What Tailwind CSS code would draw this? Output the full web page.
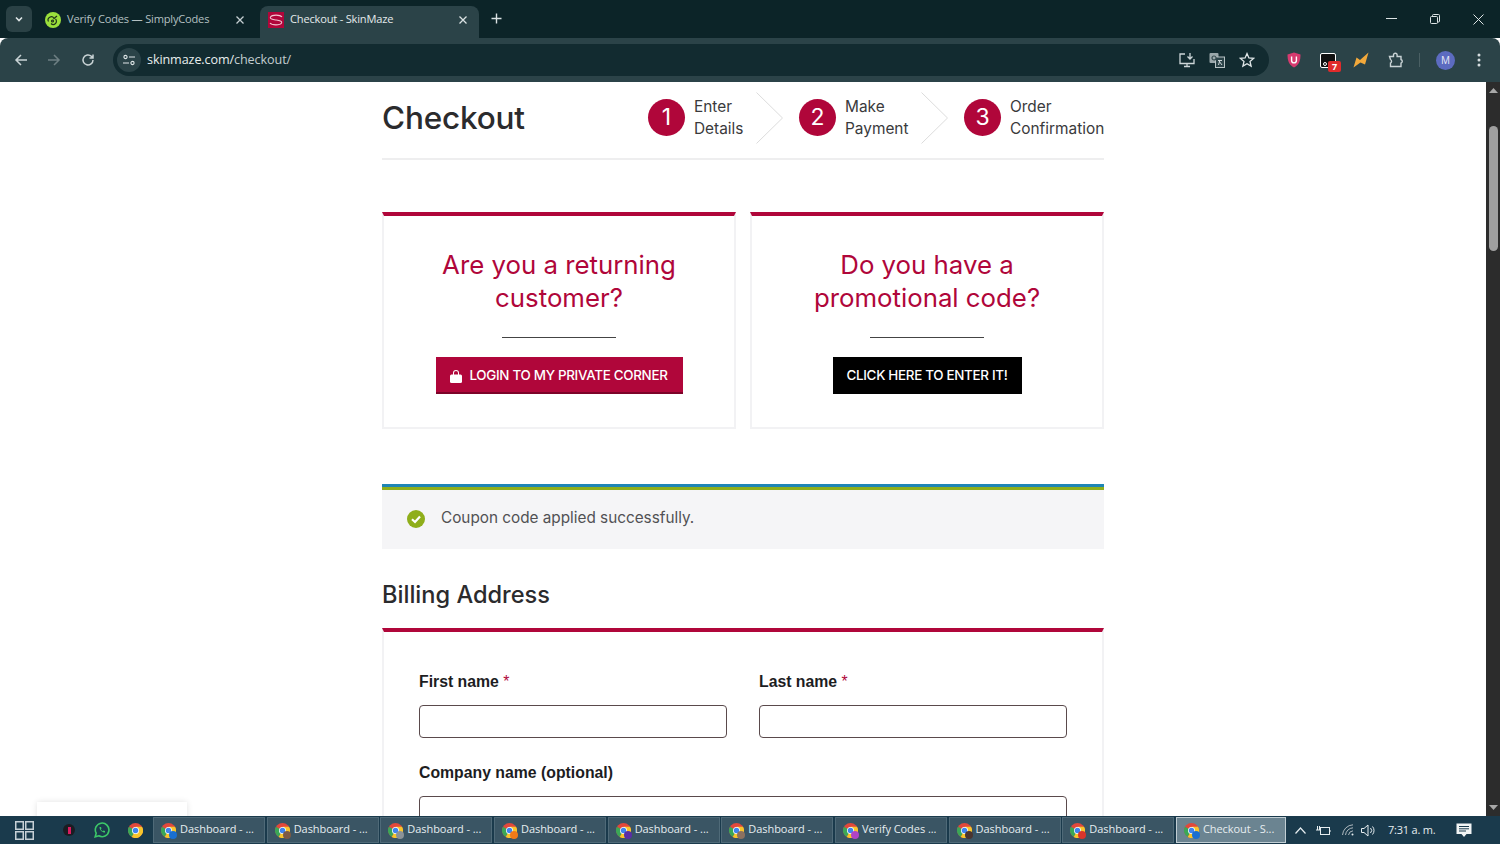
<!DOCTYPE html>
<html lang="en">
<head>
    <meta charset="UTF-8">
    <meta name="viewport" content="width=device-width, initial-scale=1.0">
    <title>Checkout - SkinMaze</title>
    <script src="https://cdn.jsdelivr.net/npm/@tailwindcss/browser@4"></script>
</head>
<body class="bg-white overflow-hidden">

<svg class="hidden">
    <symbol id="chrome" viewBox="0 0 24 24">
        <circle cx="12" cy="12" r="12" fill="#e2483b"/>
        <path d="M12 12 L1.6 6 A12 12 0 0 0 6 22.4 Z" fill="#3aa757"/>
        <path d="M12 6 H22.4 A12 12 0 0 1 6 22.4 L12 12 Z" fill="#f7c52c"/>
        <circle cx="12" cy="12" r="5.6" fill="#fff"/>
        <circle cx="12" cy="12" r="4.4" fill="#3f84ee"/>
    </symbol>
</svg>

<div class="w-[1500px] h-[844px] flex flex-col font-['Open_Sans',sans-serif]">

    <!-- tab strip -->
    <div class="h-[38px] bg-[#0c2428] flex items-end relative text-[11.1px]">
        <div class="w-[26px] h-[26px] ml-[6px] mb-[6px] rounded-md bg-[#2a4145] flex items-center justify-center">
            <svg width="10" height="10" viewBox="0 0 10 10" fill="none" stroke="#dfe6e7" stroke-width="1.6"><path d="M2 3.5 L5 6.5 L8 3.5"/></svg>
        </div>
        <div class="w-[228px] h-[32px] flex items-center pl-[13px] pb-[5px] text-[#b4c0c2]">
            <svg width="16" height="16" viewBox="0 0 16 16"><circle cx="8" cy="8" r="8" fill="#9be03c"/><path d="M3.5 9.5 a3 3 0 0 1 5.5 -3 l3 -2.5 M6 11.5 a3 3 0 0 0 4.5 -4.5 M6.5 9 a1 1 0 1 0 2 0 a1 1 0 1 0 -2 0" fill="none" stroke="#20331a" stroke-width="1.2"/></svg>
            <span class="ml-[6px] w-[168px] tracking-[-0.2px]">Verify Codes — SimplyCodes</span>
            <svg width="10" height="10" viewBox="0 0 10 10" stroke="#c6d0d2" stroke-width="1.3"><path d="M1.5 1.5 L8.5 8.5 M8.5 1.5 L1.5 8.5"/></svg>
        </div>
        <div class="w-[219px] h-[32px] bg-[#2b4348] rounded-t-lg flex items-center pl-[8px] pb-[5px] text-[#e4eaeb]">
            <span class="w-[16px] h-[16px] bg-[#b0063a] flex items-center justify-center">
                <svg width="14" height="12" viewBox="0 0 14 12" fill="none" stroke="#f3c6d2" stroke-width="1.1"><path d="M13 3 C11 0.5 3 0.5 1.5 3 C0.5 5 4 5.5 7 6 C10 6.5 13.5 7 12.5 9 C11 11.5 3 11.5 1 9"/></svg>
            </span>
            <span class="ml-[6px] w-[168px] tracking-[-0.2px]">Checkout - SkinMaze</span>
            <svg width="10" height="10" viewBox="0 0 10 10" stroke="#dbe2e3" stroke-width="1.3"><path d="M1.5 1.5 L8.5 8.5 M8.5 1.5 L1.5 8.5"/></svg>
        </div>
        <div class="ml-[12px] mb-[14px]">
            <svg width="11" height="11" viewBox="0 0 11 11" stroke="#dbe2e3" stroke-width="1.4"><path d="M5.5 0.5 V10.5 M0.5 5.5 H10.5"/></svg>
        </div>
        <div class="ml-auto flex items-center h-full">
            <svg class="mr-[33px]" width="11" height="2" viewBox="0 0 11 2"><rect width="11" height="1" fill="#dde4e5"/></svg>
            <svg class="mr-[33px]" width="10" height="10" viewBox="0 0 10 10" fill="none" stroke="#dde4e5"><rect x="0.5" y="2.5" width="7" height="7" rx="1"/><path d="M2.5 2.5 V1.5 a1 1 0 0 1 1 -1 H8.5 a1 1 0 0 1 1 1 V7 a1 1 0 0 1 -1 1 H7.5"/></svg>
            <svg class="mr-[16px]" width="11" height="11" viewBox="0 0 11 11" stroke="#dde4e5"><path d="M0.5 0.5 L10.5 10.5 M10.5 0.5 L0.5 10.5"/></svg>
        </div>
    </div>

    <!-- toolbar -->
    <div class="h-[44px] bg-[#2b4348] rounded-t-lg flex items-center">
        <svg class="ml-[14px]" width="14" height="14" viewBox="0 0 14 14" fill="none" stroke="#c9d3d5" stroke-width="1.5"><path d="M13 7 H2 M7 2 L2 7 L7 12"/></svg>
        <svg class="ml-[19px]" width="14" height="14" viewBox="0 0 14 14" fill="none" stroke="#6d7f83" stroke-width="1.5"><path d="M1 7 H12 M7 2 L12 7 L7 12"/></svg>
        <svg class="ml-[20px]" width="14" height="14" viewBox="0 0 14 14" fill="none" stroke="#c9d3d5" stroke-width="1.5"><path d="M12 7 A5 5 0 1 1 10.4 3.3 L12 5 M12 1.5 V5 H8.5"/></svg>
        <div class="ml-[18px] w-[1156px] h-[32px] rounded-full bg-[#122b30] flex items-center pl-[4px]">
            <span class="w-[24px] h-[24px] rounded-full bg-[#2b4348] flex items-center justify-center">
                <svg width="12" height="12" viewBox="0 0 12 12" fill="none" stroke="#dfe6e7" stroke-width="1.1"><circle cx="2.5" cy="3" r="1.6"/><path d="M6 3 H12 M0 9 H6"/><circle cx="9.5" cy="9" r="1.6"/></svg>
            </span>
            <span class="ml-[6px] text-[12.6px] text-[#e8eeee] tracking-[-0.1px]">skinmaze.com/<span class="text-[#c2cdcf]">checkout/</span></span>
            <span class="ml-auto flex items-center mr-[14px] gap-[14px]">
                <svg width="16" height="16" viewBox="0 0 16 16" fill="none" stroke="#cdd6d8" stroke-width="1.3"><path d="M6 2 H1 V11.5 H15 V7 M5 14.5 H11 M8 11.5 V14.5 M11 1 V6.5 M8.5 4.5 L11 7 L13.5 4.5"/></svg>
                <svg width="16" height="16" viewBox="0 0 16 16"><rect x="0.5" y="1" width="9" height="10" rx="1" fill="#9aa7aa"/><rect x="6.5" y="5" width="9" height="10.5" fill="#2b4348" stroke="#b7c2c4"/><circle cx="5" cy="6" r="2" fill="none" stroke="#33494d" stroke-width="1.2"/><path d="M9 8.5 H13 M11 8 L9.5 13 M10 9 L13 13" stroke="#cdd6d8" fill="none"/></svg>
                <svg width="16" height="16" viewBox="0 0 16 16" fill="none" stroke="#dfe6e7" stroke-width="1.3"><path d="M8 1.6 L9.9 6 L14.6 6.4 L11 9.5 L12.1 14.1 L8 11.7 L3.9 14.1 L5 9.5 L1.4 6.4 L6.1 6 Z"/></svg>
            </span>
        </div>
        <div class="flex items-center ml-[18px]">
            <svg width="14" height="16" viewBox="0 0 14 16"><path d="M7 0.5 L13.5 2.5 C13.5 9 12 13 7 15.5 C2 13 0.5 9 0.5 2.5 Z" fill="#d63a6f"/><path d="M4.6 4.5 V8.5 a2.4 2.4 0 0 0 4.8 0 V4.5" fill="none" stroke="#fff" stroke-width="1.4"/></svg>
            <span class="relative ml-[19px] w-[16px] h-[15px] rounded-[2px] border border-white bg-[#111]">
                <span class="absolute left-[2px] bottom-[1px] w-[4px] h-[4px] rounded-full border border-white"></span>
                <span class="absolute left-[7px] top-[7px] w-[13px] h-[11px] rounded-[2px] bg-[#e02b2b] text-white text-[9px] leading-[11px] font-bold text-center">7</span>
            </span>
            <svg class="ml-[17px]" width="16" height="16" viewBox="0 0 16 16"><path d="M0.5 15.5 L3.5 5.5 L7 8 L15.5 0.5 L12 12.5 L7.5 10.5 Z" fill="#f2a93b"/></svg>
            <svg class="ml-[18px]" width="17" height="17" viewBox="0 0 17 17" fill="none" stroke="#c9d3d5" stroke-width="1.4"><path d="M2 5 H6 V3.5 a1.8 1.8 0 0 1 3.6 0 V5 H13.5 V8 a1.9 1.9 0 0 1 0 3.6 V15 H3 V11.5 a2 2 0 0 0 0 -3.5 Z" transform="translate(0.5 -0.5)"/></svg>
            <span class="ml-[15px] w-px h-[14px] bg-[#4a5f63]"></span>
            <span class="ml-[16px] w-[19px] h-[19px] rounded-full bg-[#5c6bc0] text-[#e8eaf6] text-[10px] leading-[19px] text-center">M</span>
            <svg class="ml-[22px]" width="4" height="14" viewBox="0 0 4 14" fill="#d5dddf"><circle cx="2" cy="2" r="1.5"/><circle cx="2" cy="7" r="1.5"/><circle cx="2" cy="12" r="1.5"/></svg>
        </div>
    </div>

    <!-- page and scrollbar -->
    <div class="h-[734px] flex overflow-hidden">
        <div class="relative flex-1 overflow-hidden bg-white font-['Inter',sans-serif] text-[#2b2b2d]">
            <div class="w-[722px] ml-[382px]">

                <!-- heading + steps -->
                <div class="h-[78px] border-b-2 border-[#eeeeef] flex items-center justify-between pb-[5px]">
                    <h1 class="text-[31.5px] font-medium tracking-[-0.2px] pt-[1px]">Checkout</h1>
                    <div class="flex items-center text-[15.4px] leading-[22px] text-[#3a3a3c]">
                        <span class="w-[37px] h-[37px] rounded-full bg-[#b0063a] text-white text-[23px] pb-[2px] flex items-center justify-center">1</span>
                        <span class="ml-[9px] w-[50px] pt-[1px]">Enter Details</span>
                        <svg class="ml-[12px]" width="27" height="52" viewBox="0 0 27 52" fill="none" stroke="#dcdcdc"><path d="M0.5 0.5 L26.5 26 L0.5 51.5"/></svg>
                        <span class="ml-[16px] w-[37px] h-[37px] rounded-full bg-[#b0063a] text-white text-[23px] pb-[2px] flex items-center justify-center">2</span>
                        <span class="ml-[9px] w-[64px] pt-[1px]">Make Payment</span>
                        <svg class="ml-[12px]" width="27" height="52" viewBox="0 0 27 52" fill="none" stroke="#dcdcdc"><path d="M0.5 0.5 L26.5 26 L0.5 51.5"/></svg>
                        <span class="ml-[16px] w-[37px] h-[37px] rounded-full bg-[#b0063a] text-white text-[23px] pb-[2px] flex items-center justify-center">3</span>
                        <span class="ml-[9px] w-[94px] pt-[1px]">Order Confirmation</span>
                    </div>
                </div>

                <!-- login / promo cards -->
                <div class="mt-[52px] flex gap-[14px]">
                    <div class="w-[354px] h-[217px] border-2 border-[#f2f2f4] border-t-4 border-t-[#b0063a] flex flex-col items-center pt-[32px]">
                        <h2 class="w-[290px] text-[25.8px] leading-[33px] text-[#b0063a] text-center">Are you a returning customer?</h2>
                        <div class="mt-[23px] w-[114px] h-px bg-[#444]"></div>
                        <a class="mt-[19px] w-[247px] h-[37px] bg-[#b0063a] border-b-2 border-[#7c0329] pt-[2px] flex items-center justify-center text-white text-[13.4px] font-medium tracking-[-0.3px]">
                            <svg class="mr-[7px]" width="12" height="14" viewBox="0 0 12 14" fill="#fff"><path d="M3 6 V4 a3 3 0 0 1 6 0 V6 H8 V4 a2 2 0 0 0 -4 0 V6 Z"/><rect y="5.5" width="12" height="8.5" rx="1.5"/></svg>
                            LOGIN TO MY PRIVATE CORNER
                        </a>
                    </div>
                    <div class="w-[354px] h-[217px] border-2 border-[#f2f2f4] border-t-4 border-t-[#b0063a] flex flex-col items-center pt-[32px]">
                        <h2 class="w-[290px] text-[25.8px] leading-[33px] text-[#b0063a] text-center">Do you have a promotional code?</h2>
                        <div class="mt-[23px] w-[114px] h-px bg-[#444]"></div>
                        <a class="mt-[19px] w-[189px] h-[37px] bg-black flex items-center justify-center text-white text-[13.4px] font-medium tracking-[-0.3px]">CLICK HERE TO ENTER IT!</a>
                    </div>
                </div>

                <!-- coupon notice -->
                <div class="mt-[55px] h-[65px] bg-[#f5f5f7] border-t-[3px] border-[#1e85b5]">
                    <div class="h-[3px] bg-[#8fae1b]"></div>
                    <div class="flex items-center h-[57px] pl-[25px] text-[15.3px] text-[#515154]">
                        <svg width="18" height="18" viewBox="0 0 18 18"><circle cx="9" cy="9" r="9" fill="#8fae1b"/><path d="M5 9.3 L8 12 L13 6.5" fill="none" stroke="#fff" stroke-width="2.2"/></svg>
                        <span class="ml-[16px]">Coupon code applied successfully.</span>
                    </div>
                </div>

                <!-- billing -->
                <h3 class="mt-[31px] text-[23.6px] leading-[30px] font-medium">Billing Address</h3>
                <div class="mt-[18px] border-t-4 border-[#b0063a] border-x-2 border-x-[#f2f2f4] px-[35px] pt-[40px] h-[300px] font-['Liberation_Sans',sans-serif] text-[#1d1d1f]">
                    <div class="flex gap-[32px]">
                        <label class="block w-[308px] text-[15.8px] leading-[20px] font-bold">First name <span class="text-[#b0063a] font-normal">*</span>
                            <input type="text" class="block mt-[13px] w-full h-[33px] border border-[#5a4a4c] rounded-[4px]">
                        </label>
                        <label class="block w-[308px] text-[15.8px] leading-[20px] font-bold">Last name <span class="text-[#b0063a] font-normal">*</span>
                            <input type="text" class="block mt-[13px] w-full h-[33px] border border-[#5a4a4c] rounded-[4px]">
                        </label>
                    </div>
                    <label class="block mt-[25px] text-[15.8px] leading-[20px] font-bold">Company name (optional)
                        <input type="text" class="block mt-[13px] w-[648px] h-[33px] border border-[#5a4a4c] rounded-[4px]">
                    </label>
                </div>
            </div>

            <!-- floating widget peeking from below -->
            <div class="absolute left-[37px] top-[720px] w-[150px] h-[30px] bg-white shadow-[0_0_6px_rgba(0,0,0,0.12)]"></div>
        </div>

        <!-- scrollbar -->
        <div class="w-[14px] bg-[#2c2c2c] flex flex-col items-center">
            <svg class="mt-[6px]" width="9" height="5" viewBox="0 0 9 5" fill="#a8a8a8"><path d="M4.5 0 L9 5 H0 Z"/></svg>
            <div class="mt-[33px] w-[9px] h-[125px] rounded-full bg-[#9f9f9f]"></div>
            <svg class="mt-auto mb-[6px]" width="9" height="5" viewBox="0 0 9 5" fill="#a8a8a8"><path d="M4.5 5 L9 0 H0 Z"/></svg>
        </div>
    </div>

    <!-- taskbar -->
    <div class="h-[28px] bg-[#1a3a4c] flex items-center text-[11px] tracking-[-0.05px] text-[#e6edf0]">
        <svg class="ml-[15px]" width="19" height="19" viewBox="0 0 19 19" fill="none" stroke="#c6d0d6" stroke-width="1.5"><rect x="0.75" y="0.75" width="7.5" height="7.5"/><rect x="10.75" y="0.75" width="7.5" height="7.5"/><rect x="0.75" y="10.75" width="7.5" height="7.5"/><rect x="10.75" y="10.75" width="7.5" height="7.5"/></svg>
        <span class="ml-[29px] w-[12px] h-[12px] rounded-full bg-[#1c1c22] flex items-center justify-center"><span class="w-[3px] h-[7px] bg-[#d81b60]"></span></span>
        <svg class="ml-[19px]" width="16" height="16" viewBox="0 0 16 16" fill="none" stroke="#3cc768" stroke-width="1.6"><path d="M1.2 14.8 L2.2 11.2 A6.8 6.8 0 1 1 4.8 13.8 Z"/><path d="M5.5 5 C5.5 8 8 10.5 11 10.5 L11 9 L9.5 8.5 L8.8 9.2 C8 8.8 7.2 8 6.8 7.2 L7.5 6.5 L7 5 Z" fill="#3cc768" stroke="none"/></svg>
        <svg class="ml-[18px]" width="15" height="15"><use href="#chrome"/></svg>

        <div class="ml-[10px] flex gap-[1.67px] h-[26px]">
            <div class="relative w-[112px] bg-[#3a5564] border border-[#4f6a78] flex items-center pl-[7px]">
                <span class="relative w-[15px] h-[15px]"><svg width="15" height="15"><use href="#chrome"/></svg><span class="absolute -right-[1px] -bottom-[1px] w-[8px] h-[8px] rounded-full bg-[#1a6fd0]"></span></span><span class="ml-[4px] pb-[2px]">Dashboard - ...</span>
            </div>
            <div class="relative w-[112px] bg-[#3a5564] border border-[#4f6a78] flex items-center pl-[7px]">
                <span class="relative w-[15px] h-[15px]"><svg width="15" height="15"><use href="#chrome"/></svg><span class="absolute -right-[1px] -bottom-[1px] w-[8px] h-[8px] rounded-full bg-[#7d5a45]"></span></span><span class="ml-[4px] pb-[2px]">Dashboard - ...</span>
            </div>
            <div class="relative w-[112px] bg-[#3a5564] border border-[#4f6a78] flex items-center pl-[7px]">
                <span class="relative w-[15px] h-[15px]"><svg width="15" height="15"><use href="#chrome"/></svg><span class="absolute -right-[1px] -bottom-[1px] w-[8px] h-[8px] rounded-full bg-[#8a9298]"></span></span><span class="ml-[4px] pb-[2px]">Dashboard - ...</span>
            </div>
            <div class="relative w-[112px] bg-[#3a5564] border border-[#4f6a78] flex items-center pl-[7px]">
                <span class="relative w-[15px] h-[15px]"><svg width="15" height="15"><use href="#chrome"/></svg><span class="absolute -right-[1px] -bottom-[1px] w-[8px] h-[8px] rounded-full bg-[#ef7a1a]"></span></span><span class="ml-[4px] pb-[2px]">Dashboard - ...</span>
            </div>
            <div class="relative w-[112px] bg-[#3a5564] border border-[#4f6a78] flex items-center pl-[7px]">
                <span class="relative w-[15px] h-[15px]"><svg width="15" height="15"><use href="#chrome"/></svg><span class="absolute -right-[1px] -bottom-[1px] w-[8px] h-[8px] rounded-full bg-[#5a2ea6]"></span></span><span class="ml-[4px] pb-[2px]">Dashboard - ...</span>
            </div>
            <div class="relative w-[112px] bg-[#3a5564] border border-[#4f6a78] flex items-center pl-[7px]">
                <span class="relative w-[15px] h-[15px]"><svg width="15" height="15"><use href="#chrome"/></svg><span class="absolute -right-[1px] -bottom-[1px] w-[8px] h-[8px] rounded-full bg-[#8c7160]"></span></span><span class="ml-[4px] pb-[2px]">Dashboard - ...</span>
            </div>
            <div class="relative w-[112px] bg-[#3a5564] border border-[#4f6a78] flex items-center pl-[7px]">
                <span class="relative w-[15px] h-[15px]"><svg width="15" height="15"><use href="#chrome"/></svg><span class="absolute -right-[1px] -bottom-[1px] w-[8px] h-[8px] rounded-full bg-[#b044c4]"></span></span><span class="ml-[4px] pb-[2px]">Verify Codes ...</span>
            </div>
            <div class="relative w-[112px] bg-[#3a5564] border border-[#4f6a78] flex items-center pl-[7px]">
                <span class="relative w-[15px] h-[15px]"><svg width="15" height="15"><use href="#chrome"/></svg><span class="absolute -right-[1px] -bottom-[1px] w-[8px] h-[8px] rounded-full bg-[#4a3530]"></span></span><span class="ml-[4px] pb-[2px]">Dashboard - ...</span>
            </div>
            <div class="relative w-[112px] bg-[#3a5564] border border-[#4f6a78] flex items-center pl-[7px]">
                <span class="relative w-[15px] h-[15px]"><svg width="15" height="15"><use href="#chrome"/></svg><span class="absolute -right-[1px] -bottom-[1px] w-[8px] h-[8px] rounded-full bg-[#d9352c]"></span></span><span class="ml-[4px] pb-[2px]">Dashboard - ...</span>
            </div>
            <div class="relative w-[110px] bg-[#6b8491] border border-[#c1ced4] flex items-center pl-[7px]">
                <span class="relative w-[15px] h-[15px]"><svg width="15" height="15"><use href="#chrome"/></svg><span class="absolute -right-[1px] -bottom-[1px] w-[8px] h-[8px] rounded-full bg-[#1a6fd0]"></span></span><span class="ml-[4px] pb-[2px]">Checkout - S...</span>
            </div>
        </div>

        <svg class="ml-[9px]" width="11" height="7" viewBox="0 0 11 7" fill="none" stroke="#e6edf0" stroke-width="1.2"><path d="M0.5 6.5 L5.5 1 L10.5 6.5"/></svg>
        <svg class="ml-[10px]" width="15" height="11" viewBox="0 0 15 11" fill="none" stroke="#e6edf0"><rect x="4.5" y="2.5" width="9" height="7"/><path d="M0 5 H4.5 M1.5 1 V5 M3.5 1 V5 M14 5 V7"/></svg>
        <svg class="ml-[11px]" width="13" height="12" viewBox="0 0 13 12" fill="none" stroke="#aeb9bf"><path d="M0.5 11 A11 11 0 0 1 11 0.8 M3.5 11 A8 8 0 0 1 11 3.8 M6.5 11 A5 5 0 0 1 11 6.8"/><circle cx="10.5" cy="10.5" r="1" fill="#e6edf0" stroke="none"/></svg>
        <svg class="ml-[6px]" width="15" height="13" viewBox="0 0 15 13" fill="none" stroke="#e6edf0"><path d="M0.5 4.5 H3 L7 1 V12 L3 8.5 H0.5 Z M9.5 4 A3.5 3.5 0 0 1 9.5 9 M11.5 2.5 A6 6 0 0 1 11.5 10.5"/></svg>
        <span class="ml-[12px] w-[60px] text-[11px] tracking-[-0.2px]">7:31 a. m.</span>
        <svg class="ml-[8px]" width="16" height="15" viewBox="0 0 16 15"><path d="M0.5 0.5 H15.5 V11 H10.5 L8 14 L5.5 11 H0.5 Z" fill="#f1f4f5"/><path d="M3 3.5 H13 M3 5.8 H13 M3 8 H10" stroke="#1a3a4c"/></svg>
    </div>
</div>

</body>
</html>
